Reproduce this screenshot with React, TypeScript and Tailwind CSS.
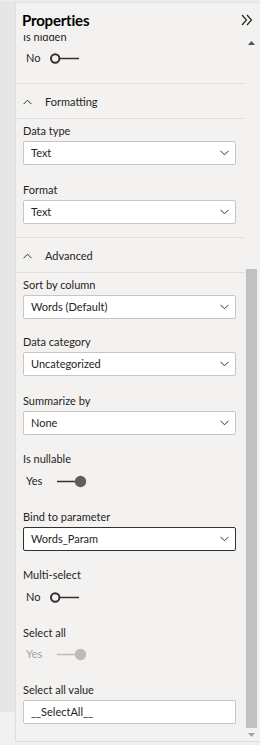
import React from 'react';

const font = { fontFamily: 'Lato, "Open Sans", sans-serif' };

const ChevronDown = () => (
    <svg width="9" height="6" viewBox="0 0 9 6" className="shrink-0">
        <path d="M0.5 0.8 L4.5 4.8 L8.5 0.8" fill="none" stroke="#323130" strokeWidth="1" />
    </svg>
);

const ChevronUp = () => (
    <svg width="9" height="6" viewBox="0 0 9 6" className="shrink-0">
        <path d="M0.5 5.2 L4.5 1.2 L8.5 5.2" fill="none" stroke="#323130" strokeWidth="1" />
    </svg>
);

const Label: React.FC<{ text: string; mt: string }> = ({ text, mt }) => (
    <div className={`${mt} h-[16px] leading-[16px] text-[11px] text-[#252423]`}>{text}</div>
);

const Dropdown: React.FC<{ value: string; focused?: boolean; chevron?: boolean }> = ({ value, focused, chevron = true }) => (
    <div
        className={`mt-[2px] mr-[9px] h-[24px] flex items-center justify-between pl-[7px] pr-[6px] bg-white rounded-[2px] border text-[11px] text-[#252423] ${focused ? 'border-[#323130]' : 'border-[#c8c6c4]'}`}
    >
        <span>{value}</span>
        {chevron && <ChevronDown />}
    </div>
);

const Toggle: React.FC<{ on: boolean; label: string; mt: string; disabled?: boolean }> = ({ on, label, mt, disabled }) => {
    const c = disabled ? '#bebbb8' : '#323130';
    return (
        <div className={`${mt} h-[16px] flex items-center pl-[3px]`}>
            <span className={`w-[24px] text-[11px] leading-[16px] ${disabled ? 'text-[#a19f9d]' : 'text-[#252423]'}`}>{label}</span>
            <svg width="37" height="13" viewBox="0 0 37 13">
                {on ? (
                    <>
                        <line x1="7" y1="6.5" x2="26" y2="6.5" stroke={c} strokeWidth="1.5" />
                        <circle cx="30.5" cy="6.5" r="5.7" fill={disabled ? '#bebbb8' : '#605e5c'} />
                    </>
                ) : (
                    <>
                        <circle cx="5.2" cy="6.5" r="4.2" fill="none" stroke={c} strokeWidth="2" />
                        <line x1="9.5" y1="6.5" x2="29" y2="6.5" stroke={c} strokeWidth="1.5" />
                    </>
                )}
            </svg>
        </div>
    );
};

const SectionHeader: React.FC<{ title: string }> = ({ title }) => (
    <div className="h-[35px] pt-[2px] flex items-center pl-[7px] text-[11px] text-[#252423] border-b border-[#e1dfdd]">
        <ChevronUp />
        <span className="ml-[13px]">{title}</span>
    </div>
);

export default function App() {
    return (
        <div className="w-[260px] h-[745px] flex flex-col bg-[#f0f0f0] overflow-hidden" style={font}>
            <div className="h-[3px] bg-[#ebebeb] border-b border-[#e3e3e3]" />
            <div className="h-[739px] flex">
                <div className="w-[15px] flex flex-col">
                    <div className="h-[709px] bg-[#e6e6e6]" />
                    <div className="flex-1 bg-[#f0f0f0]" />
                </div>
                <div className="flex-1 flex flex-col bg-[#f3f2f1] border-l border-[#dedede] border-b">
                    <div className="h-[32px] shrink-0 flex items-start justify-between pl-[6px] pr-[7px] pt-[8px]">
                        <span className="text-[15px] leading-[18px] font-bold text-black tracking-[-0.2px]">Properties</span>
                        <svg width="12" height="12" viewBox="0 0 12 12" className="mt-[3px]">
                            <path d="M1 1 L5.5 6 L1 11 M6 1 L10.5 6 L6 11" fill="none" stroke="#252423" strokeWidth="1.2" />
                        </svg>
                    </div>
                    <div className="flex-1 flex overflow-hidden">
                        <div className="flex-1 flex flex-col">
                            <div className="pl-[7px] flex flex-col">
                                <Label text="Is hidden" mt="-mt-[6px]" />
                                <Toggle on={false} label="No" mt="mt-[5px]" />
                            </div>
                            <div className="mt-[17px] border-b border-[#e1dfdd]" />
                            <SectionHeader title="Formatting" />
                            <div className="pl-[7px] flex flex-col">
                                <Label text="Data type" mt="mt-[4px]" />
                                <Dropdown value="Text" />
                                <Label text="Format" mt="mt-[17px]" />
                                <Dropdown value="Text" />
                            </div>
                            <div className="mt-[13px] border-b border-[#e1dfdd]" />
                            <SectionHeader title="Advanced" />
                            <div className="pl-[7px] flex flex-col">
                                <Label text="Sort by column" mt="mt-[4px]" />
                                <Dropdown value="Words (Default)" />
                                <Label text="Data category" mt="mt-[15px]" />
                                <Dropdown value="Uncategorized" />
                                <Label text="Summarize by" mt="mt-[17px]" />
                                <Dropdown value="None" />
                                <Label text="Is nullable" mt="mt-[16px]" />
                                <Toggle on label="Yes" mt="mt-[6px]" />
                                <Label text="Bind to parameter" mt="mt-[20px]" />
                                <Dropdown value="Words_Param" focused />
                                <Label text="Multi-select" mt="mt-[16px]" />
                                <Toggle on={false} label="No" mt="mt-[6px]" />
                                <Label text="Select all" mt="mt-[20px]" />
                                <Toggle on label="Yes" mt="mt-[5px]" disabled />
                                <Label text="Select all value" mt="mt-[20px]" />
                                <Dropdown value="__SelectAll__" chevron={false} />
                            </div>
                        </div>
                        <div className="w-[13px] mr-[2px] flex flex-col">
                            <div className="h-[16px] flex items-center justify-center">
                                <svg width="7" height="4" viewBox="0 0 7 4"><path d="M0 4 L3.5 0 L7 4 Z" fill="#505050" /></svg>
                            </div>
                            <div className="h-[218px]" />
                            <div className="h-[459px] w-[11px] ml-[1px] bg-[#c1c1c1]" />
                            <div className="flex-1 flex items-center justify-center">
                                <svg width="7" height="4" viewBox="0 0 7 4"><path d="M0 0 L3.5 4 L7 0 Z" fill="#a3a3a3" /></svg>
                            </div>
                        </div>
                    </div>
                </div>
            </div>
        </div>
    );
}
